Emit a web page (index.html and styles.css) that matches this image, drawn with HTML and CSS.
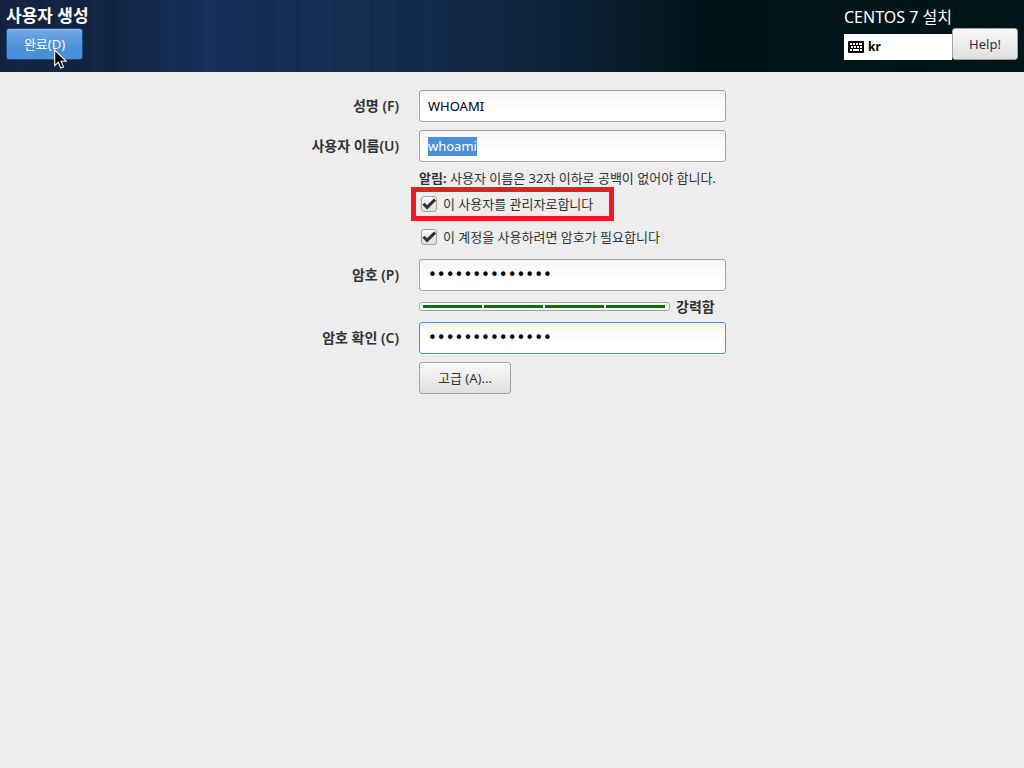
FILE: index.html
```html
<!DOCTYPE html>
<html lang="ko">
<head>
<meta charset="utf-8">
<meta name="viewport" content="width=device-width, initial-scale=1">
<title>사용자 생성</title>
<link rel="stylesheet" href="styles.css">
</head>
<body>
<header class="banner">
  <div class="banner-start">
    <h1 class="page-title">사용자 생성</h1>
    <button class="button button-primary" type="submit" form="user-form">완료(D)
      <svg class="pointer" width="13" height="20" viewBox="0 0 13 20" aria-hidden="true"><path d="M.7 1v15.6l3.6-3.4 2.5 5.9 2.7-1.2L7 12.2h5.1z" fill="#000" stroke="#fff" stroke-width="1.1"/></svg>
    </button>
  </div>
  <div class="banner-end">
    <div class="product">
      <p class="product-name">CENTOS 7 설치</p>
      <div class="keyboard">
        <svg width="16" height="12" viewBox="0 0 16 12" aria-hidden="true"><rect width="16" height="12" rx="1"/><path d="M2 3h2m1 0h2m1 0h2m1 0h3M3 6h2m1 0h2m1 0h2m1 0h2M2 9h2m1 0h6m1 0h2" stroke="#fff" stroke-width="2"/></svg>
        <span>kr</span>
      </div>
    </div>
    <button class="button button-help" type="button">Help!</button>
  </div>
</header>
<main>
  <form class="form" id="user-form">
    <label class="label" for="fullname">성명 (F)</label>
    <input class="entry" id="fullname" type="text" value="WHOAMI">

    <label class="label" for="username">사용자 이름(U)</label>
    <input class="entry entry-selected" id="username" type="text" value="whoami">

    <p class="hint"><b>알림:</b> 사용자 이름은 32자 이하로 공백이 없어야 합니다.</p>

    <label class="check check-marked"><input type="checkbox" checked>이 사용자를 관리자로합니다</label>
    <label class="check check-password"><input type="checkbox" checked>이 계정을 사용하려면 암호가 필요합니다</label>

    <label class="label" for="password">암호 (P)</label>
    <input class="entry entry-password" id="password" type="password" value="whoami12345678">

    <div class="strength">
      <div class="meter" role="img" aria-label="암호 강도"><i></i><i></i><i></i><i></i></div>
      <b>강력함</b>
    </div>

    <label class="label" for="confirm">암호 확인 (C)</label>
    <input class="entry entry-password entry-active" id="confirm" type="password" value="whoami12345678">

    <button class="button button-advanced" type="button">고급 (A)...</button>
  </form>
</main>
</body>
</html>
```
FILE: styles.css
```css
* {
  box-sizing: border-box;
}

body {
  margin: 0;
  min-height: 100vh;
  background: #ededed;
  color: #2e3436;
  font: 13px/20px "Noto Sans", "Noto Sans CJK KR", sans-serif;
}

h1,
p {
  margin: 0;
}

.banner {
  display: flex;
  justify-content: space-between;
  height: 72px;
  padding: 4px 6px 12px;
  color: #fff;
  background:
    repeating-linear-gradient(90deg, rgba(0, 8, 30, 0.07) 0 2px, transparent 7px 15px, rgba(40, 90, 150, 0.05) 21px 23px, transparent 29px 37px) 0 0 / 430px 100% no-repeat,
    linear-gradient(90deg, #14233f 0, #12233f 90px, #142849 150px, #162e57 210px, #152c52 260px, #142f50 340px, #122948 430px, #10263f 510px, #0c2034 580px, #071a24 650px, #03131a 700px, #021519 100%);
}

.banner-start {
  display: flex;
  flex-direction: column;
  align-items: flex-start;
}

.page-title {
  font-size: 17px;
  line-height: 24px;
  font-weight: 600;
}

.banner-end {
  display: flex;
  align-items: flex-end;
}

.product {
  width: 108px;
  white-space: nowrap;
}

.product-name {
  font-size: 16px;
  line-height: 26px;
}

.keyboard {
  display: flex;
  align-items: center;
  gap: 4px;
  height: 26px;
  margin-top: 4px;
  padding: 0 4px;
  background: #fff;
  color: #000;
  font-size: 12px;
  font-weight: 700;
}

.button {
  height: 32px;
  padding: 0 16px;
  border: 1px solid #a1a1a1;
  border-radius: 3px;
  background: linear-gradient(#f8f8f8, #e0e0e0);
  box-shadow: inset 0 1px #fff;
  color: #2e3436;
  font: inherit;
  white-space: nowrap;
}

.button-primary {
  position: relative;
  width: 77px;
  border-color: #184d88;
  background: linear-gradient(#78abe4, #4a90d9 60%, #4a90d9);
  box-shadow: inset 0 1px #8ab8ea;
  color: #fff;
}

.pointer {
  position: absolute;
  left: 47px;
  top: 20px;
}

.button-help {
  width: 66px;
}

.form {
  display: grid;
  grid-template-columns: 101px 307px;
  justify-content: center;
  align-items: center;
  gap: 8px 20px;
  padding: 18px 0;
}

.label {
  grid-column: 1;
  text-align: right;
  font-size: 14px;
  font-weight: 600;
  white-space: nowrap;
}

.entry {
  grid-column: 2;
  width: 100%;
  height: 32px;
  padding: 0 8px;
  border: 1px solid #a1a1a1;
  border-radius: 3px;
  background: linear-gradient(#f4f4f4, #fff 60%);
  box-shadow: 0 1px #f8f8f8;
  color: #000;
  font: inherit;
}

.entry-selected {
  background:
    linear-gradient(#4a90d9, #4a90d9) 8px center / 49px 19px no-repeat,
    linear-gradient(#f4f4f4, #fff 60%);
  color: #fff;
}

.entry-password {
  font-family: "DejaVu Sans", sans-serif;
  font-size: 15px;
  font-weight: 400;
}

.entry-active {
  border-color: #4a90d9;
}

.hint {
  grid-column: 2;
  line-height: 16px;
  white-space: nowrap;
}

.check {
  grid-column: 2;
  justify-self: start;
  display: flex;
  align-items: center;
  gap: 6px;
  padding-left: 2px;
  white-space: nowrap;
}

.check input {
  appearance: none;
  width: 16px;
  height: 16px;
  margin: 0;
  border: 1px solid #a1a1a1;
  border-radius: 3px;
  background:
    url('data:image/svg+xml,<svg xmlns="http://www.w3.org/2000/svg" viewBox="0 0 14 14"><path d="M1.5 6.8l3.6 3.6L13 2.6" fill="none" stroke="%232e3436" stroke-width="3"/></svg>') center / 14px 14px no-repeat,
    linear-gradient(#fafafa, #dedede);
}

.check-marked {
  position: relative;
}

.check-marked::after {
  content: "";
  position: absolute;
  inset: -7px -21px -7px -8px;
  border: 5px solid #ed1c24;
}

.check-password {
  margin: 5px 0 4px;
}

.strength {
  grid-column: 2;
  display: flex;
  align-items: center;
  gap: 6px;
  height: 15px;
}

.meter {
  display: flex;
  gap: 2px;
  width: 251px;
  height: 9px;
  padding: 2px 4px 2px 3px;
  border: 1px solid #a1a1a1;
  border-radius: 3px;
  background: #fff;
}

.meter i {
  flex: 1;
  background: #007300;
}

.strength b {
  font-weight: 600;
  font-size: 14px;
}

.button-advanced {
  grid-column: 2;
  justify-self: start;
  width: 92px;
}
```
